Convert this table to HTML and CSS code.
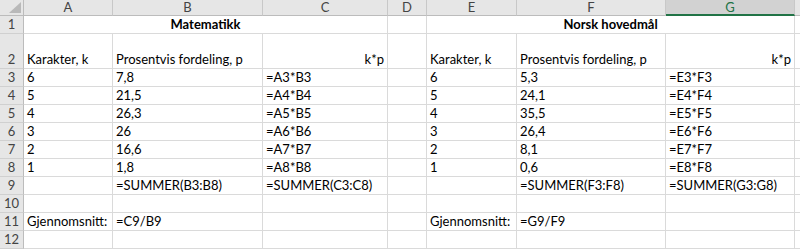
FILE: index.html
```html
<!DOCTYPE html>
<html lang="nb">
<head>
  <meta charset="UTF-8">
  <title>Karakterfordeling</title>
  <link rel="stylesheet" href="styles.css">
</head>
<body>

  <div class="sheet">
    <!-- column headers -->
    <div class="corner"><span class="corner-mark"></span></div>
    <div class="col-head">A</div>
    <div class="col-head">B</div>
    <div class="col-head">C</div>
    <div class="col-head">D</div>
    <div class="col-head">E</div>
    <div class="col-head">F</div>
    <div class="col-head active">G</div>
    <div class="col-head"></div>

    <!-- row 1 -->
    <div class="row-head">1</div>
    <div class="cell title span3">Matematikk</div>
    <div class="cell"></div>
    <div class="cell title span3">Norsk hovedmål</div>
    <div class="cell"></div>

    <!-- row 2 -->
    <div class="row-head">2</div>
    <div class="cell">Karakter, k</div>
    <div class="cell">Prosentvis fordeling, p</div>
    <div class="cell right">k*p</div>
    <div class="cell"></div>
    <div class="cell">Karakter, k</div>
    <div class="cell">Prosentvis fordeling, p</div>
    <div class="cell right">k*p</div>
    <div class="cell"></div>

    <div class="row-head">3</div>
    <div class="cell">6</div><div class="cell">7,8</div><div class="cell">=A3*B3</div>
    <div class="cell"></div>
    <div class="cell">6</div><div class="cell">5,3</div><div class="cell">=E3*F3</div>
    <div class="cell"></div>

    <div class="row-head">4</div>
    <div class="cell">5</div><div class="cell">21,5</div><div class="cell">=A4*B4</div>
    <div class="cell"></div>
    <div class="cell">5</div><div class="cell">24,1</div><div class="cell">=E4*F4</div>
    <div class="cell"></div>

    <div class="row-head">5</div>
    <div class="cell">4</div><div class="cell">26,3</div><div class="cell">=A5*B5</div>
    <div class="cell"></div>
    <div class="cell">4</div><div class="cell">35,5</div><div class="cell">=E5*F5</div>
    <div class="cell"></div>

    <div class="row-head">6</div>
    <div class="cell">3</div><div class="cell">26</div><div class="cell">=A6*B6</div>
    <div class="cell"></div>
    <div class="cell">3</div><div class="cell">26,4</div><div class="cell">=E6*F6</div>
    <div class="cell"></div>

    <div class="row-head">7</div>
    <div class="cell">2</div><div class="cell">16,6</div><div class="cell">=A7*B7</div>
    <div class="cell"></div>
    <div class="cell">2</div><div class="cell">8,1</div><div class="cell">=E7*F7</div>
    <div class="cell"></div>

    <div class="row-head">8</div>
    <div class="cell">1</div><div class="cell">1,8</div><div class="cell">=A8*B8</div>
    <div class="cell"></div>
    <div class="cell">1</div><div class="cell">0,6</div><div class="cell">=E8*F8</div>
    <div class="cell"></div>

    <div class="row-head">9</div>
    <div class="cell"></div><div class="cell">=SUMMER(B3:B8)</div><div class="cell">=SUMMER(C3:C8)</div>
    <div class="cell"></div>
    <div class="cell"></div><div class="cell">=SUMMER(F3:F8)</div><div class="cell">=SUMMER(G3:G8)</div>
    <div class="cell"></div>

    <div class="row-head">10</div>
    <div class="cell"></div><div class="cell"></div><div class="cell"></div>
    <div class="cell"></div>
    <div class="cell"></div><div class="cell"></div><div class="cell"></div>
    <div class="cell"></div>

    <div class="row-head">11</div>
    <div class="cell">Gjennomsnitt:</div><div class="cell">=C9/B9</div><div class="cell"></div>
    <div class="cell"></div>
    <div class="cell">Gjennomsnitt:</div><div class="cell">=G9/F9</div><div class="cell"></div>
    <div class="cell"></div>

    <div class="row-head">12</div>
    <div class="cell"></div><div class="cell"></div><div class="cell"></div>
    <div class="cell"></div>
    <div class="cell"></div><div class="cell"></div><div class="cell"></div>
    <div class="cell"></div>
  </div>

</body>
</html>
```

FILE: styles.css
```css
body {
  margin: 0;
  background-color: #fff;
  font-family: Lato, 'Open Sans', sans-serif;
  font-size: 13px;
  color: #000;
}
.sheet {
  display: grid;
  grid-template-columns: 24px 89px 150px 125px 39px 90px 149px 129px 1fr;
  grid-template-rows: 16px 18px 35px repeat(10, 18px);
  overflow: hidden;
}
.sheet > div {
  box-sizing: border-box;
  white-space: nowrap;
  overflow: hidden;
}
.corner {
  background-color: #e6e6e6;
  border-right: 1px solid #bcbcbc;
  border-bottom: 1px solid #bcbcbc;
  position: relative;
}
.corner-mark {
  position: absolute;
  right: 2px;
  bottom: 2px;
  width: 12px;
  height: 11px;
  background-color: #b9b9b9;
  clip-path: polygon(100% 0, 100% 100%, 0 100%);
}
.col-head {
  background-color: #e6e6e6;
  color: #444;
  text-align: center;
  font-size: 13px;
  line-height: 15px;
  border-right: 1px solid #c8c8c8;
  border-bottom: 1px solid #bcbcbc;
}
.col-head.active {
  background-color: #d2d2d2;
  color: #217346;
  border-bottom: 2px solid #217346;
}
.row-head {
  background-color: #e6e6e6;
  color: #444;
  font-size: 13px;
  border-right: 1px solid #bcbcbc;
  border-bottom: 1px solid #d0d0d0;
  display: flex;
  align-items: flex-end;
  justify-content: center;
  padding-bottom: 1px;
}
.cell {
  border-right: 1px solid #dadada;
  border-bottom: 1px solid #dadada;
  display: flex;
  align-items: flex-end;
  padding: 0 3px 1px 3px;
}
.cell.right {
  justify-content: flex-end;
}
.cell.title {
  justify-content: center;
  font-weight: bold;
}
.span3 {
  grid-column: span 3;
}
```
